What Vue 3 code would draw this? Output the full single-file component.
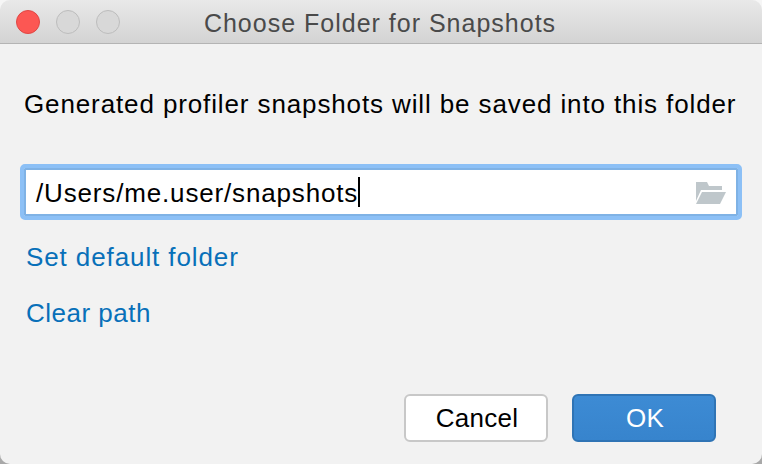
<script setup>
const path = '/Users/me.user/snapshots'
</script>

<template>
  <div class="dialog">
    <!-- Barre de titre -->
    <header class="titlebar">
      <div class="lights">
        <span class="light close"></span>
        <span class="light"></span>
        <span class="light"></span>
      </div>
      <span class="title">Choose Folder for Snapshots</span>
    </header>

    <main class="body">
      <p class="message">Generated profiler snapshots will be saved into this folder</p>

      <div class="field">
        <span class="value">{{ path }}</span><span class="caret"></span>
        <svg class="folder" width="30" height="22" viewBox="0 0 30 22">
          <path d="M0 0H11L13 4H26V8H5L0 19Z" fill="#bfc7cb" />
          <path d="M6 10H30L24 22H0Z" fill="#bfc7cb" />
        </svg>
      </div>

      <a class="link first">Set default folder</a>
      <a class="link clear">Clear path</a>

      <div class="actions">
        <button class="btn">Cancel</button>
        <button class="btn primary">OK</button>
      </div>
    </main>
  </div>
</template>

<style>
html, body {
  margin: 0;
  background: linear-gradient(#f6f6f6 60%, #a8a8a8);
}
</style>

<style scoped>
.dialog {
  width: 762px;
  height: 464px;
  display: flex;
  flex-direction: column;
  overflow: hidden;
  border-radius: 10px;
  background: #f2f2f2;
  font-family: "Liberation Sans", Arial, sans-serif;
  color: #000;
}

.titlebar {
  height: 44px;
  box-sizing: border-box;
  flex: none;
  position: relative;
  display: flex;
  align-items: center;
  justify-content: center;
  padding-top: 4px;
  padding-right: 2px;
  background: linear-gradient(#e9e9e9, #d3d3d3);
  border-bottom: 1px solid #b4b4b4;
}

.lights {
  position: absolute;
  left: 16px;
  top: 10px;
  display: flex;
  gap: 16px;
}

.light {
  width: 24px;
  height: 24px;
  box-sizing: border-box;
  border-radius: 50%;
  background: #d8d8d8;
  border: 1px solid #bcbcbc;
}

.light.close {
  background: #fc5753;
  border-color: #df4744;
}

.title {
  font-size: 25px;
  letter-spacing: 1px;
  color: #4a4a4a;
}

.body {
  flex: 1;
  display: flex;
  flex-direction: column;
  padding: 0 20px;
}

.message {
  margin: 44px 0 0 4px;
  font-size: 26px;
  line-height: 32px;
  letter-spacing: 0.88px;
  white-space: nowrap;
}

.field {
  margin-top: 44px;
  height: 56px;
  box-sizing: border-box;
  display: flex;
  align-items: center;
  padding: 2px 0 0 12px;
  background: #fff;
  border: 4px solid #8cc0f6;
  border-radius: 5px;
  box-shadow: inset 0 0 0 2px #7fb2e5;
  font-size: 26px;
  letter-spacing: 0.84px;
  position: relative;
}

.caret {
  width: 2px;
  height: 30px;
  margin-top: -2px;
  background: #000;
}

.folder {
  position: absolute;
  right: 12px;
  top: 14px;
}

.link {
  margin-left: 6px;
  font-size: 26px;
  line-height: 32px;
  letter-spacing: 0.9px;
  color: #0870b9;
  cursor: pointer;
}

.link.first {
  margin-top: 21px;
}

.link.clear {
  margin-top: 24px;
  letter-spacing: 0.5px;
}

.actions {
  margin-top: auto;
  margin-bottom: 22px;
  margin-right: 26px;
  display: flex;
  justify-content: flex-end;
  gap: 24px;
}

.btn {
  width: 144px;
  height: 48px;
  box-sizing: border-box;
  border: 2px solid #c8c8c8;
  border-radius: 6px;
  background: #fff;
  color: #000;
  font-family: inherit;
  font-size: 26px;
  letter-spacing: 0.3px;
  padding: 0 0 0 2px;
}

.btn.primary {
  background: linear-gradient(#3d8bd4, #3784cd);
  border-color: #2f74b5;
  color: #fff;
}
</style>
